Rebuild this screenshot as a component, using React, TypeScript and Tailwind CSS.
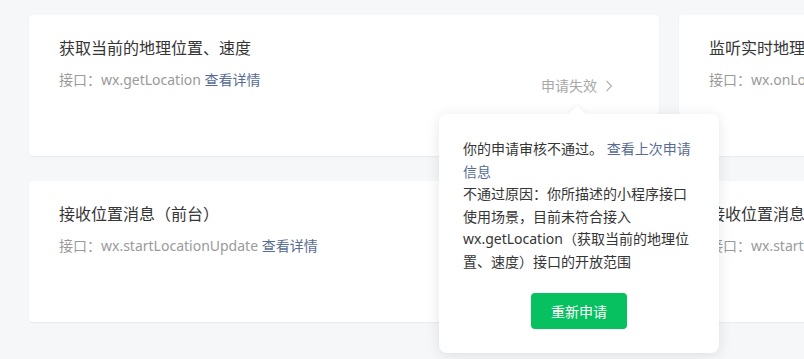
import React from 'react';

interface Api {
    title: string;
    api: string;
    status?: string;
}

const apis: Api[] = [
    { title: '获取当前的地理位置、速度', api: 'wx.getLocation', status: '申请失效' },
    { title: '监听实时地理位置变化事件', api: 'wx.onLocationChange' },
    { title: '接收位置消息（前台）', api: 'wx.startLocationUpdate' },
    { title: '接收位置消息（后台）', api: 'wx.startLocationUpdateBackground' },
];

const ChevronRight: React.FC = () => (
    <svg width="8" height="12" viewBox="0 0 8 12" fill="none" stroke="#b2b2b2" strokeWidth="1.2">
        <path d="M1.5 1l5 5-5 5" />
    </svg>
);

const ApiCard: React.FC<{ item: Api }> = ({ item }) => (
    <div className="h-[141px] rounded bg-white px-[30px] pt-[21px] shadow-[0_1px_2px_rgba(0,0,0,0.06)]">
        <div className="text-[16px] leading-6 text-[#353535] whitespace-nowrap">{item.title}</div>
        <div className="mt-[9px] flex items-start justify-between">
            <div className="text-[14px] leading-[22px] text-[#9a9a9a] whitespace-nowrap">
                接口：{item.api} <span className="text-[#576b95]">查看详情</span>
            </div>
            {item.status && (
                <div className="mt-[6px] mr-[16px] flex items-center gap-[8px] text-[14px] leading-[22px] text-[#a8a8a8]">
                    {item.status}
                    <ChevronRight />
                </div>
            )}
        </div>
    </div>
);

const App: React.FC = () => {
    return (
        <div
            className="relative h-[359px] w-[804px] overflow-hidden bg-[#f6f7f9] pl-[29px] pt-[15px]"
            style={{ fontFamily: '"Noto Sans", "Noto Sans CJK SC", sans-serif' }}
        >
            <div className="grid grid-cols-[630px_630px] gap-x-5 gap-y-[25px]">
                {apis.map(a => (
                    <ApiCard key={a.api} item={a} />
                ))}
            </div>

            <div className="absolute left-[439px] top-[114px] w-[280px] rounded-lg bg-white px-6 pt-6 pb-6 shadow-[0_2px_14px_rgba(0,0,0,0.1)]">
                <div className="absolute -top-[6px] left-[132px] h-3 w-3 rotate-45 bg-white shadow-[-2px_-2px_4px_rgba(0,0,0,0.03)]" />
                <div className="relative text-[14px] leading-[22.5px] text-[#353535]">
                    <p>
                        你的申请审核不通过。 <span className="text-[#576b95]">查看上次申请信息</span>
                    </p>
                    <p>不通过原因：你所描述的小程序接口使用场景，目前未符合接入wx.getLocation（获取当前的地理位置、速度）接口的开放范围</p>
                </div>
                <div className="mt-5 flex justify-center">
                    <button className="h-[36px] w-[96px] rounded bg-[#07c160] text-[14px] text-white">重新申请</button>
                </div>
            </div>
        </div>
    );
};

export default App;
